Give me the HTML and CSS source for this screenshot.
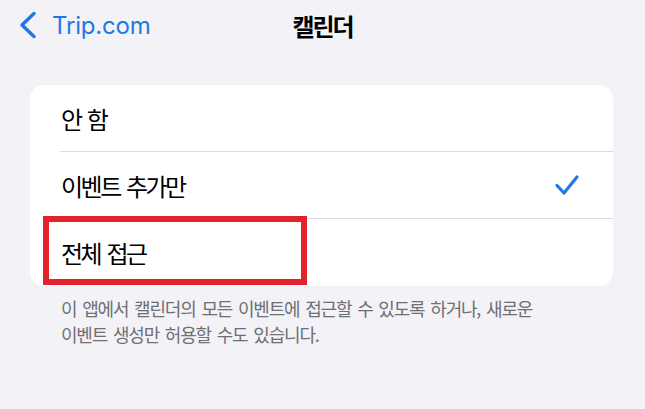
FILE: index.html
```html
<!DOCTYPE html>
<html lang="ko">

<head>
    <meta charset="UTF-8">
    <meta name="viewport" content="width=device-width, initial-scale=1.0">
    <title>캘린더</title>
    <link rel="stylesheet" href="styles.css">
</head>

<body>
    <div id="app">
        <header class="navbar">
            <a class="back" href="#">
                <svg class="chevron" width="18" height="28" viewBox="0 0 18 28">
                    <polyline points="15,2.5 3,14 15,25.5" fill="none" stroke="currentColor" stroke-width="3.4" stroke-linecap="round" stroke-linejoin="round"/>
                </svg>
                <span class="back-label">Trip.com</span>
            </a>
            <div class="title">캘린더</div>
            <div class="spacer"></div>
        </header>

        <section class="group">
            <ul class="list">
                <li class="row"><span class="label">안 함</span></li>
                <li class="row">
                    <span class="label">이벤트 추가만</span>
                    <svg class="check" width="26" height="22" viewBox="0 0 26 22">
                        <polyline points="3,11.5 10,19 23,3" fill="none" stroke="currentColor" stroke-width="3.2" stroke-linecap="round" stroke-linejoin="round"/>
                    </svg>
                </li>
                <li class="row"><span class="label">전체 접근</span></li>
            </ul>
            <div class="highlight"></div>
        </section>

        <p class="footnote">이 앱에서 캘린더의 모든 이벤트에 접근할 수 있도록 하거나, 새로운<br>이벤트 생성만 허용할 수도 있습니다.</p>
    </div>
</body>

</html>
```

FILE: styles.css
```css
* {
    box-sizing: border-box;
}

:root {
    --app-background-color: #f2f2f7;
    --tint-color: #1f79e5;
    --separator-color: #dcdce0;
    --label-color: #000000;
    --secondary-label: #6f6f74;
    --mark-color: #e3232b;
    --ko-font: 'Noto Sans CJK KR', 'Noto Sans', sans-serif;
}

html, body, #app {
    margin: 0;
    height: 100%;
    background-color: var(--app-background-color);
    font-family: Inter, var(--ko-font);
}

/* nav bar */
.navbar {
    height: 50px;
    display: grid;
    grid-template-columns: 1fr auto 1fr;
    align-items: center;
}

.navbar > .back {
    display: flex;
    align-items: center;
    gap: 15px;
    padding-left: 19px;
    color: var(--tint-color);
    text-decoration: none;
}

.back-label {
    font-family: Inter, sans-serif;
    font-size: 24px;
    letter-spacing: -0.2px;
}

.navbar > .title {
    font-family: var(--ko-font);
    font-size: 24px;
    font-weight: 700;
    letter-spacing: -2px;
    color: var(--label-color);
}

/* grouped list */
.group {
    position: relative;
    margin: 35px 32px 0 30px;
}

.list {
    list-style: none;
    margin: 0;
    padding: 0;
    background: #ffffff;
    border-radius: 14px;
    overflow: hidden;
}

.row {
    height: 67px;
    margin-left: 30px;
    padding: 0 33px 0 1px;
    display: flex;
    align-items: center;
    justify-content: space-between;
    border-bottom: 1px solid var(--separator-color);
}

.row:last-child {
    border-bottom: none;
}

.row > .label {
    font-family: var(--ko-font);
    font-size: 24px;
    letter-spacing: -2.5px;
    word-spacing: 2px;
    color: var(--label-color);
}

.row > .check {
    color: var(--tint-color);
}

/* red annotation box over the last row */
.highlight {
    position: absolute;
    left: 13px;
    top: 131px;
    width: 264px;
    height: 69px;
    border: 6px solid var(--mark-color);
}

.footnote {
    margin: 0;
    padding: 9px 20px 0 61px;
    font-family: var(--ko-font);
    font-size: 18px;
    line-height: 26px;
    letter-spacing: -1.2px;
    word-spacing: 2px;
    color: var(--secondary-label);
}
```
